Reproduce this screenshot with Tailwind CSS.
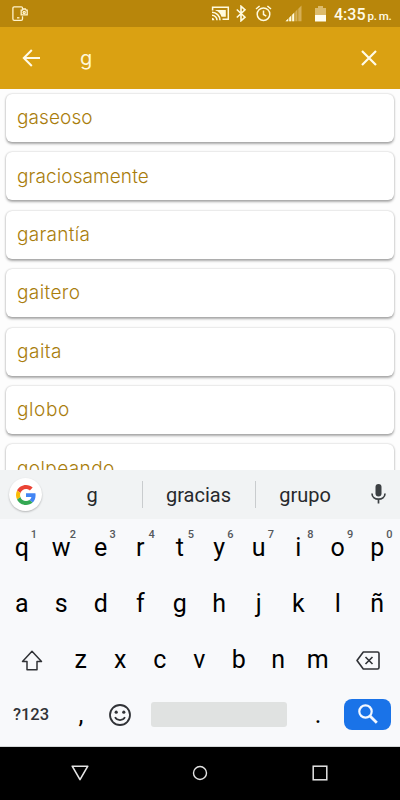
<!DOCTYPE html>
<html lang="es">
<head>
<meta charset="utf-8">
<title>Buscar</title>
<script src="https://cdn.jsdelivr.net/npm/@tailwindcss/browser@4"></script>
</head>
<body class="bg-white">
<div class="w-[400px] h-[800px] flex flex-col overflow-hidden font-[Roboto,sans-serif]">
  <header class="h-[27px] shrink-0 bg-[#b8860b] flex items-center text-[#fffbe8] pl-[12px]">
    <svg class="w-[17px] h-[16px] shrink-0" viewBox="0 0 17 16" fill="none" stroke="#fff3cc" stroke-width="1.300"><path d="M10.500 3.500V2.200Q10.500.8 9.200.8H2.200Q.9.800.9 2.200V13Q.9 14.400 2.200 14.400H9.200Q10.500 14.400 10.500 13V10.200"/><path d="M5 11.800H7.400"/><path d="M9.200 4.200H10.500L11.200 3H13.400L14.100 4.200H15.200V8.900H9.200Z"/><circle cx="12.200" cy="6.500" r="1.100"/></svg>
    <svg class="w-[19px] h-[15px] ml-[182px] shrink-0" viewBox="0 0 19 15" fill="none" stroke="#fffbe0" stroke-width="1.500"><path d="M1.600 4.500V1.300H17.300V13.300H11.500"/><path d="M4.500 4H14.800V10.700H10.500C9.500 7.500 7.500 5.300 4.500 4.500Z" fill="#fffbe0" stroke="none"/><path d="M1 6.300A8 8 0 0 1 9 14.200M1 9.200A5 5 0 0 1 6 14.200"/><path d="M1 11.800A2.500 2.500 0 0 1 3.400 14.200H1Z" fill="#fffbe0" stroke="none"/></svg>
    <svg class="w-[12px] h-[17px] ml-[5px] shrink-0" viewBox="0 0 12 17" fill="none" stroke="#fffbe0" stroke-width="1.600"><path d="M1.800 4.500L10 12.200L6 15.800V1.200L10 4.800L1.800 12.500"/></svg>
    <svg class="w-[17px] h-[17px] ml-[8px] shrink-0" viewBox="0 0 17 17" fill="none" stroke="#fffbe0" stroke-width="1.500"><circle cx="8.500" cy="9.200" r="6.300"/><path d="M8.500 5.500V9.500L11.300 11.200M1 4L4.600 1M12.400 1L16 4"/></svg>
    <svg class="w-[17px] h-[17px] ml-[13px] shrink-0" viewBox="0 0 17 17"><path d="M.5 16.300L16.500.5V16.300Z" fill="#d5ae55"/><path d="M.5 16.300L9.500 7.400V16.300Z" fill="#fffbe0"/><path d="M3.700 10V17M6.700 7V17M9.800 4V17M12.800 1V17" stroke="#b8860b" stroke-width=".8"/></svg>
    <svg class="w-[11px] h-[16px] ml-[13px] shrink-0" viewBox="0 0 11 16"><path d="M0 2H3V0H8V2H11V9H0Z" fill="#dcbb6c"/><path d="M0 9H11V15.500H0Z" fill="#fffdf0"/></svg>
    <div class="ml-[8px] flex items-baseline font-medium whitespace-nowrap leading-none pt-[2px]"><span class="text-[16px]">4:35</span><span class="text-[11.500px] ml-[2px] tracking-[-.2px]">p.<span class="ml-[2px]">m.</span></span></div>
  </header>
  <div class="h-[62px] shrink-0 bg-[#daa112] flex items-center pl-[22px] pr-[23px]">
    <svg class="w-[19px] h-[18px]" viewBox="0 0 19 18" fill="none" stroke="#fffbe8" stroke-width="2"><path d="M18 9H2M9.800 1L1.800 9L9.800 17"/></svg>
    <span class="ml-[39px] text-[20px] leading-[24px] text-[#fff8dc] font-[Inter,sans-serif]">g</span>
    <svg class="w-[16px] h-[16px] ml-auto" viewBox="0 0 16 16" fill="none" stroke="#fffbe8" stroke-width="2.200"><path d="M1 1L15 15M15 1L1 15"/></svg>
  </div>
  <main class="h-[381px] shrink-0 overflow-hidden bg-[#fdfdfd] px-[6px] pt-[5px] flex flex-col gap-[10.400px] font-[Inter,sans-serif] font-light text-[19px] text-[#a97d0c] tracking-[.1px]">
    <div class="h-[48px] shrink-0 rounded-[6px] bg-white shadow-[0_1.500px_2.500px_rgba(0,0,0,.32),0_0_2px_rgba(0,0,0,.16)] flex items-center pl-[11px] pt-[1px]">gaseoso</div>
    <div class="h-[48px] shrink-0 rounded-[6px] bg-white shadow-[0_1.500px_2.500px_rgba(0,0,0,.32),0_0_2px_rgba(0,0,0,.16)] flex items-center pl-[11px] pt-[1px]">graciosamente</div>
    <div class="h-[48px] shrink-0 rounded-[6px] bg-white shadow-[0_1.500px_2.500px_rgba(0,0,0,.32),0_0_2px_rgba(0,0,0,.16)] flex items-center pl-[11px] pt-[1px] tracking-[.3px]">garantía</div>
    <div class="h-[48px] shrink-0 rounded-[6px] bg-white shadow-[0_1.500px_2.500px_rgba(0,0,0,.32),0_0_2px_rgba(0,0,0,.16)] flex items-center pl-[11px] pt-[1px] tracking-[.4px]">gaitero</div>
    <div class="h-[48px] shrink-0 rounded-[6px] bg-white shadow-[0_1.500px_2.500px_rgba(0,0,0,.32),0_0_2px_rgba(0,0,0,.16)] flex items-center pl-[11px] pt-[1px] tracking-[.5px]">gaita</div>
    <div class="h-[48px] shrink-0 rounded-[6px] bg-white shadow-[0_1.500px_2.500px_rgba(0,0,0,.32),0_0_2px_rgba(0,0,0,.16)] flex items-center pl-[11px] pt-[1px] tracking-[.6px]">globo</div>
    <div class="h-[48px] shrink-0 rounded-[6px] bg-white shadow-[0_1.500px_2.500px_rgba(0,0,0,.32),0_0_2px_rgba(0,0,0,.16)] flex items-center pl-[11px] pt-[1px] tracking-[.4px]">golpeando</div>
  </main>
  <div class="h-[49px] shrink-0 bg-[#f1f3f4] flex items-center text-[20px] text-[#27292c]">
    <div class="w-[33px] h-[33px] ml-[9px] rounded-full bg-white shadow-[0_1px_2px_rgba(0,0,0,.25)] flex items-center justify-center">
      <svg class="w-[20px] h-[20px]" viewBox="0 0 48 48"><path fill="#EA4335" d="M24 9.500c3.540 0 6.710 1.220 9.210 3.600l6.850-6.850C35.900 2.380 30.470 0 24 0 14.620 0 6.510 5.380 2.560 13.220l7.980 6.190C12.430 13.720 17.740 9.500 24 9.500z"/><path fill="#4285F4" d="M46.980 24.550c0-1.570-.15-3.090-.38-4.550H24v9.020h12.940c-.58 2.960-2.260 5.480-4.780 7.180l7.730 6c4.510-4.180 7.090-10.360 7.090-17.650z"/><path fill="#FBBC05" d="M10.530 28.590c-.48-1.450-.76-2.990-.76-4.590s.27-3.140.76-4.590l-7.980-6.190C.92 16.460 0 20.120 0 24s.92 7.540 2.560 10.780l7.970-6.190z"/><path fill="#34A853" d="M24 48c6.480 0 11.930-2.130 15.890-5.810l-7.730-6c-2.150 1.450-4.920 2.300-8.160 2.300-6.260 0-11.570-4.220-13.470-9.910l-7.980 6.190C6.510 42.620 14.620 48 24 48z"/></svg>
    </div>
    <div class="w-[100px] text-center">g</div>
    <div class="w-px h-[27px] bg-[#c9ccce]"></div>
    <div class="w-[112px] text-center pr-[1px]">gracias</div>
    <div class="w-px h-[27px] bg-[#c9ccce]"></div>
    <div class="w-[99px] text-center pr-[1px]">grupo</div>
    <svg class="w-[15px] h-[20px] ml-[16px] mb-[2px]" viewBox="0 0 15 20"><rect x="4.500" y="0" width="6" height="12.500" rx="3" fill="#3c4043"/><path d="M1 9.500C1 17 14 17 14 9.500M7.500 15V19.500" fill="none" stroke="#3c4043" stroke-width="1.700"/></svg>
  </div>
  <section class="h-[228px] shrink-0 bg-[#f8f9fb] border-b border-[#d5d8d8] text-[25px] text-black">
    <div class="h-[56px] grid grid-cols-10 pl-[2px] pr-[3px] pt-[2px] items-center justify-items-center">
      <div class="relative">q<span class="absolute left-full top-[-1px] ml-[2px] text-[11px] leading-[13px] font-medium text-[#55585b]">1</span></div>
      <div class="relative">w<span class="absolute left-full top-[-1px] ml-[-1px] text-[11px] leading-[13px] font-medium text-[#55585b]">2</span></div>
      <div class="relative">e<span class="absolute left-full top-[-1px] ml-[2px] text-[11px] leading-[13px] font-medium text-[#55585b]">3</span></div>
      <div class="relative">r<span class="absolute left-full top-[-1px] ml-[4px] text-[11px] leading-[13px] font-medium text-[#55585b]">4</span></div>
      <div class="relative">t<span class="absolute left-full top-[-1px] ml-[4px] text-[11px] leading-[13px] font-medium text-[#55585b]">5</span></div>
      <div class="relative">y<span class="absolute left-full top-[-1px] ml-[2px] text-[11px] leading-[13px] font-medium text-[#55585b]">6</span></div>
      <div class="relative">u<span class="absolute left-full top-[-1px] ml-[2px] text-[11px] leading-[13px] font-medium text-[#55585b]">7</span></div>
      <div class="relative">i<span class="absolute left-full top-[-1px] ml-[6px] text-[11px] leading-[13px] font-medium text-[#55585b]">8</span></div>
      <div class="relative">o<span class="absolute left-full top-[-1px] ml-[2px] text-[11px] leading-[13px] font-medium text-[#55585b]">9</span></div>
      <div class="relative">p<span class="absolute left-full top-[-1px] ml-[2px] text-[11px] leading-[13px] font-medium text-[#55585b]">0</span></div>
    </div>
    <div class="h-[56px] grid grid-cols-10 pl-[2px] pr-[3px] pt-[2px] items-center justify-items-center">
      <span>a</span><span>s</span><span>d</span><span>f</span><span>g</span><span>h</span><span>j</span><span>k</span><span>l</span><span>ñ</span>
    </div>
    <div class="h-[56px] grid grid-cols-[59px_repeat(7,39.500px)_59px] pl-[2px] pt-[2px] items-center justify-items-center">
      <svg class="w-[22px] h-[21px] mt-[1px]" viewBox="0 0 22 21" fill="none" stroke="#303236" stroke-width="1.500" stroke-linejoin="round"><path d="M11 1.200L20.500 11.400H16V19.800H6V11.400H1.500Z"/></svg>
      <span>z</span><span>x</span><span>c</span><span>v</span><span>b</span><span>n</span><span>m</span>
      <svg class="w-[24px] h-[19px] mt-[1px] ml-[1px]" viewBox="0 0 24 19" fill="none" stroke="#303236" stroke-width="1.600" stroke-linejoin="round"><path d="M7.300 1H21.500Q23 1 23 2.500V16.500Q23 18 21.500 18H7.300L1 9.500Z"/><path d="M9.500 6L16.500 13M16.500 6L9.500 13"/></svg>
    </div>
    <div class="h-[56px] flex items-center">
      <span class="w-[62px] text-center text-[16.500px] font-medium text-[#303236]">?123</span>
      <span class="w-[38px] text-center">,</span>
      <svg class="w-[22px] h-[22px] ml-[9px] mb-[1px]" viewBox="0 0 22 22" fill="none" stroke="#303236" stroke-width="1.800"><circle cx="11" cy="11" r="10"/><path d="M6 13.200C8 17 14 17 16 13.200" stroke-width="1.700"/><g fill="#303236" stroke="none"><circle cx="7.200" cy="8.200" r="1.600"/><circle cx="14.800" cy="8.200" r="1.600"/></g></svg>
      <span class="w-[136px] h-[25px] ml-[20px] mb-[1px] rounded-[3px] bg-[#e0e2e1]"></span>
      <span class="w-[57px] text-center pl-[5px]">.</span>
      <span class="w-[47px] h-[31px] mb-[2px] rounded-[8px] bg-[#1a73e8] flex items-center justify-center">
        <svg class="w-[20px] h-[20px]" viewBox="0 0 20 20" fill="none" stroke="#f4f8ff" stroke-width="2.200"><circle cx="7.500" cy="7.500" r="6.200"/><path d="M12 12L18.800 18.800" stroke-width="2.800"/></svg>
      </span>
    </div>
  </section>
  <footer class="h-[53px] shrink-0 bg-black flex items-center pl-[71px]">
    <svg class="w-[18px] h-[16px] mb-px" viewBox="0 0 18 16" fill="none" stroke="#e4e4e4" stroke-width="1.600" stroke-linejoin="round"><path d="M1.200 1.200H16.800L9 14.600Z"/></svg>
    <svg class="w-[16px] h-[16px] ml-[103px] mb-px" viewBox="0 0 16 16" fill="none" stroke="#e4e4e4" stroke-width="1.400"><circle cx="8" cy="8" r="6.500"/></svg>
    <svg class="w-[16px] h-[16px] ml-[104px] mb-px" viewBox="0 0 16 16" fill="none" stroke="#e4e4e4" stroke-width="1.500"><rect x="1.200" y="1.200" width="13.600" height="13.600"/></svg>
  </footer>
</div>
</body>
</html>
